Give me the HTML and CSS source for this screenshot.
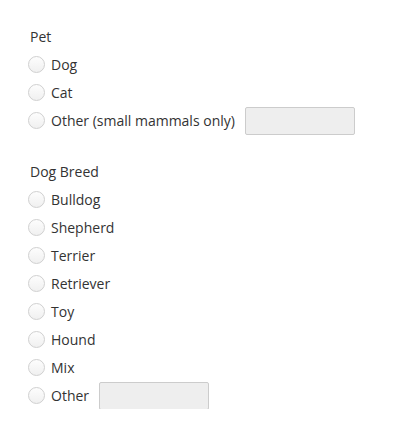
FILE: index.html
```html
<!DOCTYPE html>
<html>
<head>
<meta charset="utf-8">
<link rel="stylesheet" href="styles.css">
</head>
<body>
<form class="form">
  <div class="group">
    <div class="group-label">Pet</div>
    <label class="opt"><span class="radio"></span>Dog</label>
    <label class="opt"><span class="radio"></span>Cat</label>
    <label class="opt"><span class="radio"></span>Other (small mammals only)<span class="text-input"></span></label>
  </div>
  <div class="group">
    <div class="group-label">Dog Breed</div>
    <label class="opt"><span class="radio"></span>Bulldog</label>
    <label class="opt"><span class="radio"></span>Shepherd</label>
    <label class="opt"><span class="radio"></span>Terrier</label>
    <label class="opt"><span class="radio"></span>Retriever</label>
    <label class="opt"><span class="radio"></span>Toy</label>
    <label class="opt"><span class="radio"></span>Hound</label>
    <label class="opt"><span class="radio"></span>Mix</label>
    <label class="opt"><span class="radio"></span>Other<span class="text-input"></span></label>
  </div>
</form>
</body>
</html>
```
FILE: styles.css
```css
html, body {
  margin: 0;
  padding: 0;
  background: #fff;
}
body {
  font-family: "Open Sans", "Noto Sans", sans-serif;
  font-size: 14px;
  color: #333;
}
.form {
  padding: 23px 0 0 30px;
  display: flex;
  flex-direction: column;
  gap: 24px;
}
.group {
  display: flex;
  flex-direction: column;
}
.group-label {
  height: 27px;
  line-height: 28px;
}
.opt {
  display: flex;
  align-items: center;
  height: 28px;
}
.radio {
  width: 15px;
  height: 15px;
  border: 1px solid #d0d0d0;
  border-radius: 50%;
  background: linear-gradient(#fdfdfd, #f0f0f0);
  margin: 0 6px 0 -2px;
  flex: none;
}
.text-input {
  width: 108px;
  height: 26px;
  border: 1px solid #ccc;
  border-radius: 2px;
  background: #eee;
  margin: 2px 0 0 10px;
  flex: none;
}
```
